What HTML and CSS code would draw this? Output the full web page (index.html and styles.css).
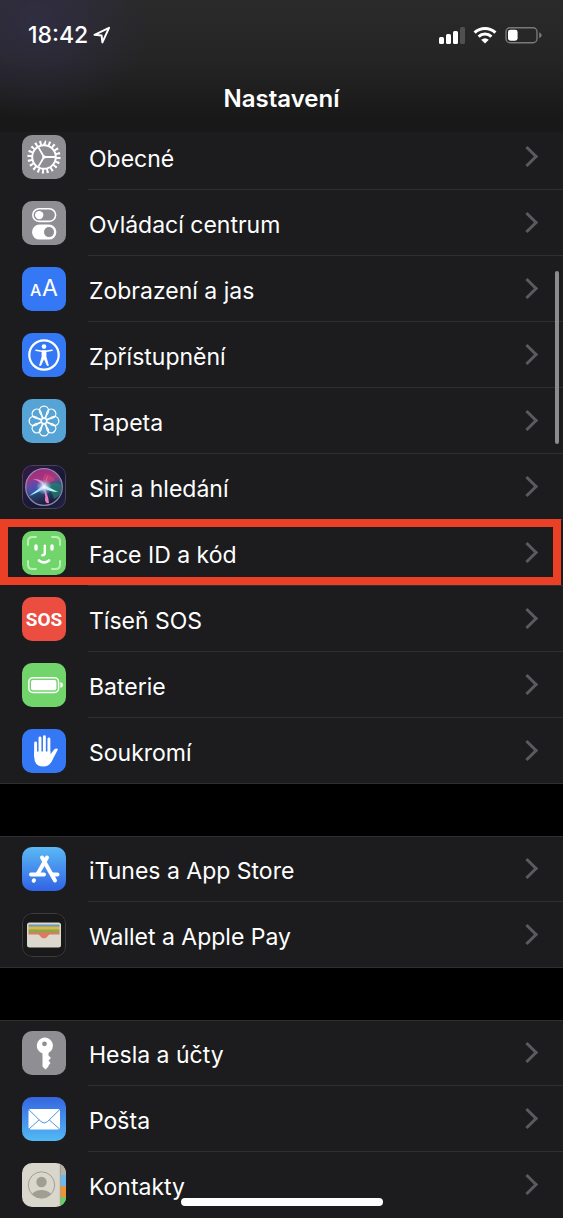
FILE: index.html
```html
<!DOCTYPE html>
<html lang="cs">
<head>
    <meta charset="UTF-8">
    <meta name="viewport" content="width=device-width, initial-scale=1">
    <title>Nastavení</title>
    <link rel="stylesheet" href="styles.css">
</head>
<body>
    <header class="header">
        <div class="status">
            <span class="time">18:42</span>
            <svg class="location" width="18" height="18" viewBox="0 0 18 18"><path d="M1.5 8.8L16 1.8L9.4 16.4L8.6 9.6Z" fill="none" stroke="#fff" stroke-width="2" stroke-linejoin="round"/></svg>
            <svg class="signal" width="26" height="18" viewBox="0 0 26 18" fill="#fff">
                <rect x="0" y="11" width="5" height="7" rx="1.5"/>
                <rect x="7" y="8" width="5" height="10" rx="1.5"/>
                <rect x="14" y="5" width="5" height="13" rx="1.5"/>
                <rect x="21" y="1" width="5" height="17" rx="1.5" fill="#505052"/>
            </svg>
            <svg width="24" height="18" viewBox="0 0 24 18">
                <g fill="none" stroke="#fff" stroke-width="3">
                    <path d="M1.6 6.6A15 15 0 0 1 22.4 6.6"/>
                    <path d="M5.6 10.6A9.3 9.3 0 0 1 18.4 10.6"/>
                </g>
                <path d="M12 17.6L8.2 13.8Q12 10.6 15.8 13.8Z" fill="#fff"/>
            </svg>
            <svg width="37" height="18" viewBox="0 0 37 18">
                <rect x="1" y="1.7" width="31" height="15" rx="4" fill="none" stroke="#79797b" stroke-width="1.4"/>
                <rect x="3" y="3.7" width="9.6" height="11" rx="2.4" fill="#fff"/>
                <path d="M34.2 6.2Q36.6 7.2 36.6 9.2T34.2 12.2Z" fill="#79797b"/>
            </svg>
        </div>
        <h1>Nastavení</h1>
    </header>

    <main class="settings">
        <ul class="group">
            <li><a href="#obecne">
                <svg class="icon gray" viewBox="0 0 44 44">
                    <g fill="none" stroke="#fff">
                        <circle cx="22" cy="22" r="14.3" stroke-width="4.6" pathLength="40" stroke-dasharray="0.9 1.1"/>
                        <circle cx="22" cy="22" r="11.8" stroke-width="2"/>
                        <path d="M22 22H33M22 22L16.4 12.4M22 22L16.4 31.6" stroke-width="1.8"/>
                    </g>
                    <circle cx="22" cy="22" r="1.8" fill="#fff"/>
                </svg>
                <span class="label">Obecné</span>
            </a></li>
            <li><a href="#centrum">
                <svg class="icon gray" viewBox="0 0 44 44">
                    <rect x="10.8" y="7.8" width="22.8" height="12.6" rx="6.3" fill="none" stroke="#fff" stroke-width="1.6"/>
                    <circle cx="17.2" cy="14.1" r="4.2" fill="#fff"/>
                    <rect x="10" y="23.6" width="24.4" height="15" rx="7.5" fill="#fff"/>
                    <circle cx="27" cy="31.1" r="5" fill="#8e8e93"/>
                </svg>
                <span class="label">Ovládací centrum</span>
            </a></li>
            <li><a href="#jas">
                <svg class="icon blue" viewBox="0 0 44 44">
                    <text class="small-a" x="8" y="29">A</text>
                    <text class="big-a" x="20" y="29">A</text>
                </svg>
                <span class="label">Zobrazení a jas</span>
            </a></li>
            <li><a href="#zpristupneni">
                <svg class="icon blue" viewBox="0 0 44 44">
                    <circle cx="22" cy="22" r="14.7" fill="none" stroke="#fff" stroke-width="2.2"/>
                    <circle cx="22" cy="13.6" r="2.3" fill="#fff"/>
                    <path d="M14 17.2L20 18.3H24L30 17.2" fill="none" stroke="#fff" stroke-width="1.6" stroke-linecap="round"/>
                    <path d="M20 17.8H24V23.8L26.4 32.4H25.2L22 25.4L18.8 32.4H17.6L20 23.8Z" fill="#fff" stroke="#fff" stroke-width=".8" stroke-linejoin="round"/>
                </svg>
                <span class="label">Zpřístupnění</span>
            </a></li>
            <li><a href="#tapeta">
                <svg class="icon cyan" viewBox="0 0 44 44">
                    <defs><path id="petal" d="M22 7.2A4.6 4.6 0 0 1 26.6 11.8C26.6 15 24 16.5 22 20C20 16.5 17.400 15 17.4 11.8A4.6 4.6 0 0 1 22 7.2Z"/></defs>
                    <g fill="none" stroke="#fff" stroke-width="1.3">
                        <use href="#petal"/>
                        <use href="#petal" transform="rotate(45 22 22)"/>
                        <use href="#petal" transform="rotate(90 22 22)"/>
                        <use href="#petal" transform="rotate(135 22 22)"/>
                        <use href="#petal" transform="rotate(180 22 22)"/>
                        <use href="#petal" transform="rotate(225 22 22)"/>
                        <use href="#petal" transform="rotate(270 22 22)"/>
                        <use href="#petal" transform="rotate(315 22 22)"/>
                    </g>
                    <circle cx="22" cy="22" r="2.6" fill="#55a4d5" stroke="#fff" stroke-width="1.2"/>
                </svg>
                <span class="label">Tapeta</span>
            </a></li>
            <li><a href="#siri">
                <svg class="icon siri" viewBox="0 0 44 44">
                    <defs>
                        <linearGradient id="orb" x1=".3" y1="0" x2=".6" y2="1">
                            <stop offset="0" stop-color="#a3287c"/>
                            <stop offset=".35" stop-color="#a03a84"/>
                            <stop offset=".55" stop-color="#2c5282"/>
                            <stop offset="1" stop-color="#19142f"/>
                        </linearGradient>
                        <radialGradient id="glow">
                            <stop offset="0" stop-color="#fff"/>
                            <stop offset=".35" stop-color="#d8e8ff" stop-opacity=".7"/>
                            <stop offset="1" stop-color="#9cc8ff" stop-opacity="0"/>
                        </radialGradient>
                    </defs>
                    <rect x=".5" y=".5" width="43" height="43" rx="9.5" fill="none" stroke="#45435c"/>
                    <circle cx="22" cy="22" r="18.3" fill="url(#orb)" stroke="#8d87ab" stroke-width="1.3"/>
                    <path d="M22 21Q34 15 39 20Q41 30 32 34Q30 25 22 21Z" fill="#23806f" opacity=".7"/>
                    <path d="M22 21Q12 13 6 18Q4 28 10 31Z" fill="#4c50ba" opacity=".7"/>
                    <path d="M22 21Q20 12 23 9Q30 10 33 15Z" fill="#e24377" opacity=".5"/>
                    <path d="M22 20L7 31Q15 28 23 23Z" fill="#9ff2ff"/>
                    <path d="M20 21Q26 27 27 38Q24 39 23 35Q24 28 20 21Z" fill="#ed7cc2"/>
                    <path d="M22 20Q30 24 36 27Q29 27 21 23Z" fill="#baffec"/>
                    <path d="M22 22Q18 16 11 14Q20 13 24 21Q23 14 26 11" fill="#e9a5d5" opacity=".75"/>
                    <circle cx="22" cy="22" r="8" fill="url(#glow)"/>
                </svg>
                <span class="label">Siri a hledání</span>
            </a></li>
            <li class="marked"><a href="#faceid">
                <svg class="icon green" viewBox="0 0 44 44">
                    <path d="M6 14V10.5Q6 6 10.5 6H14M30 6H33.5Q38 6 38 10.5V14M38 30V33.5Q38 38 33.5 38H30M14 38H10.5Q6 38 6 33.5V30" fill="none" stroke="#b9f0b4" stroke-width="2" stroke-linecap="round"/>
                    <g fill="none" stroke="#fff" stroke-linecap="round">
                        <path d="M14 15V18M30 15V18" stroke-width="3.4"/>
                        <path d="M22.8 14.6V22Q22.8 24.2 20.3 24.2" stroke-width="2.4"/>
                        <path d="M17 29.4Q22 33.4 27 29.4" stroke-width="2.6"/>
                    </g>
                </svg>
                <span class="label">Face ID a kód</span>
            </a></li>
            <li><a href="#sos">
                <svg class="icon red" viewBox="0 0 44 44"><text class="sos" x="22" y="29" text-anchor="middle">SOS</text></svg>
                <span class="label">Tíseň SOS</span>
            </a></li>
            <li><a href="#baterie">
                <svg class="icon green" viewBox="0 0 44 44">
                    <rect x="6.8" y="14.8" width="29.8" height="14.6" rx="4.2" fill="none" stroke="#fff" stroke-width="1.5"/>
                    <rect x="9" y="17" width="25.4" height="10.2" rx="2" fill="#fff"/>
                    <path d="M38.4 19Q41 20 41 22T38.4 25Z" fill="#fff"/>
                </svg>
                <span class="label">Baterie</span>
            </a></li>
            <li><a href="#soukromi">
                <svg class="icon blue" viewBox="0 0 44 44">
                    <g fill="none" stroke="#fff" stroke-width="2.9" stroke-linecap="round">
                        <path d="M13.6 14V27M18 9V24M22.4 7.8V24M26.9 10V25"/>
                    </g>
                    <path d="M12.15 22.5H28.35V25.5L32.2 20.6Q34 18.8 36 20.2L31.2 29.5Q28 37.6 21.5 37.6Q12.15 37.6 12.15 27.5Z" fill="#fff"/>
                </svg>
                <span class="label">Soukromí</span>
            </a></li>
        </ul>

        <ul class="group">
            <li><a href="#appstore">
                <svg class="icon store" viewBox="0 0 44 44">
                    <g fill="none" stroke="#fff" stroke-width="4" stroke-linecap="round">
                        <path d="M25 10.5L15.6 27M12 33.3L11.7 33.8M20 10.5L33 33.5"/>
                        <path d="M9 27.5H22M30.5 27.5H35.5"/>
                    </g>
                </svg>
                <span class="label">iTunes a App Store</span>
            </a></li>
            <li><a href="#wallet">
                <svg class="icon wallet" viewBox="0 0 44 44">
                    <rect x=".5" y=".5" width="43" height="43" rx="9.5" fill="none" stroke="#3c3c3e"/>
                    <rect x="5" y="9.5" width="34" height="25" rx="2.5" fill="#dcd8ce"/>
                    <path d="M6.5 11.5H37.5V14H6.5Z" fill="#5f9fbd"/>
                    <path d="M6.5 13.5H37.5V17H6.5Z" fill="#e2b445"/>
                    <path d="M6.5 16.5H37.5V20H6.5Z" fill="#84a94f"/>
                    <path d="M6.5 19.5H37.5V21.5H28C26 21.5 25.5 25.3 22 25.3S18 21.5 16 21.5H6.5Z" fill="#e37760"/>
                </svg>
                <span class="label">Wallet a Apple Pay</span>
            </a></li>
        </ul>

        <ul class="group">
            <li><a href="#hesla">
                <svg class="icon gray" viewBox="0 0 44 44">
                    <path d="M22.5 6.5A8.2 8.2 0 0 1 26.5 22V24.5L29 27L26.5 29.5L28.5 32L26.5 34.5V35.5L23.5 38.5L20.5 35.5V22.5A8.2 8.2 0 0 1 22.5 6.5Z" fill="#fff"/>
                    <circle cx="22.5" cy="12.8" r="2.4" fill="#8e8e93"/>
                </svg>
                <span class="label">Hesla a účty</span>
            </a></li>
            <li><a href="#posta">
                <svg class="icon mail" viewBox="0 0 44 44">
                    <rect x="6.5" y="12" width="31.5" height="20.5" rx="2" fill="#fff"/>
                    <path d="M7 12.8L19 24.6Q22.2 27.4 25.5 24.6L37.5 12.8M7 32L17.2 22.8M37.5 32L27.2 22.8" fill="none" stroke="#4b96df" stroke-width="1"/>
                </svg>
                <span class="label">Pošta</span>
            </a></li>
            <li><a href="#kontakty">
                <svg class="icon contacts" viewBox="0 0 44 44">
                    <path d="M38 0H44V12H38Z" fill="#b5b2aa"/>
                    <path d="M38.5 12H44V23H38.5Z" fill="#6cb8f0"/>
                    <path d="M38.5 23H44V34H38.5Z" fill="#ee9438"/>
                    <path d="M38.5 34H44V44H38.5Z" fill="#62d062"/>
                    <path d="M38.3 0V44" stroke="#99968e" stroke-width=".8"/>
                    <clipPath id="face"><circle cx="19.5" cy="22" r="13"/></clipPath>
                    <g fill="#a29d93" clip-path="url(#face)">
                        <circle cx="19.5" cy="19" r="5.2"/>
                        <ellipse cx="19.5" cy="33.5" rx="10.5" ry="6.5"/>
                    </g>
                    <circle cx="19.5" cy="22" r="13.2" fill="none" stroke="#a29d93" stroke-width="1"/>
                </svg>
                <span class="label">Kontakty</span>
            </a></li>
        </ul>
    </main>

    <div class="scroll-thumb"></div>
    <div class="home-bar"></div>
</body>
</html>
```
FILE: styles.css
```css
*{margin:0;padding:0;box-sizing:border-box;}
body{background:#000;color:#fff;font-family:Inter,"Liberation Sans",sans-serif;font-size:23px;}
ul{list-style:none;}
a{color:inherit;text-decoration:none;}
svg{display:block;flex:none;}

/* header */
.header{position:fixed;top:0;left:0;right:0;height:132px;z-index:2;background:radial-gradient(ellipse 110px 100px at 36px 20px,rgba(52,48,78,.65),rgba(52,48,78,0)),linear-gradient(#2a2a2b,#252526 45%,#181818 90%);}
.status{display:flex;align-items:center;gap:8px;height:69px;padding:0 21px 0 28px;}
.time{font-size:23px;font-weight:500;}
.location{margin-left:-3px;}
.signal{margin-left:auto;}
h1{font-size:24px;line-height:32px;font-weight:600;text-align:center;padding-top:14px;}

/* list */
.settings{padding-top:124px;}
.group{background:#1c1c1e;margin-bottom:52px;}
.group:last-child{margin-bottom:0;}
.group + .group{box-shadow:inset 0 1px #2f2f32;}
.group li:last-child{border-bottom:1px solid #2f2f32;}
.group:last-child li:last-child{border-bottom:0;}
.group li{position:relative;height:66px;}
.group a{display:flex;align-items:center;height:66px;padding-left:22px;}
.icon{width:44px;height:44px;border-radius:10px;margin-right:22px;}
.label{display:flex;align-items:center;flex:1;height:66px;padding:4px 26px 0 1px;border-bottom:1px solid #2f2f32;}
.group li:last-child .label{border-bottom-color:transparent;}
.label::after{content:"";width:12px;height:12px;margin:-4px 2px 0 auto;border:solid #5b5b5f;border-width:3px 3px 0 0;transform:rotate(45deg);}
.marked::after{content:"";position:absolute;top:-1px;right:2px;bottom:1px;left:0;border:8px solid #ea4025;pointer-events:none;}

/* icons */
.gray{background:#8e8e93;}
.blue{background:#3478f6;}
.cyan{background:#55a4d5;}
.green{background:#71d56c;}
.red{background:#eb4d40;}
.siri{background:linear-gradient(135deg,#351a48,#171833 60%,#202344);}
.store{background:linear-gradient(#5bb9f5,#3163e5);}
.wallet{background:#19191a;}
.mail{background:linear-gradient(#3566e0,#53b9f5);}
.contacts{background:#d9d6cc;}
.small-a{font-size:16px;font-weight:500;fill:#fff;}
.big-a{font-size:23px;fill:#fff;}
.sos{font-family:Roboto,sans-serif;font-size:19px;font-weight:700;fill:#fff;}

/* overlays */
.scroll-thumb{position:fixed;top:271px;right:4px;width:4px;height:173px;border-radius:2px;background:#8c8c8e;z-index:3;}
.home-bar{position:fixed;bottom:12px;left:50%;width:202px;height:8px;margin-left:-101px;border-radius:4px;background:#fff;z-index:3;}
```
